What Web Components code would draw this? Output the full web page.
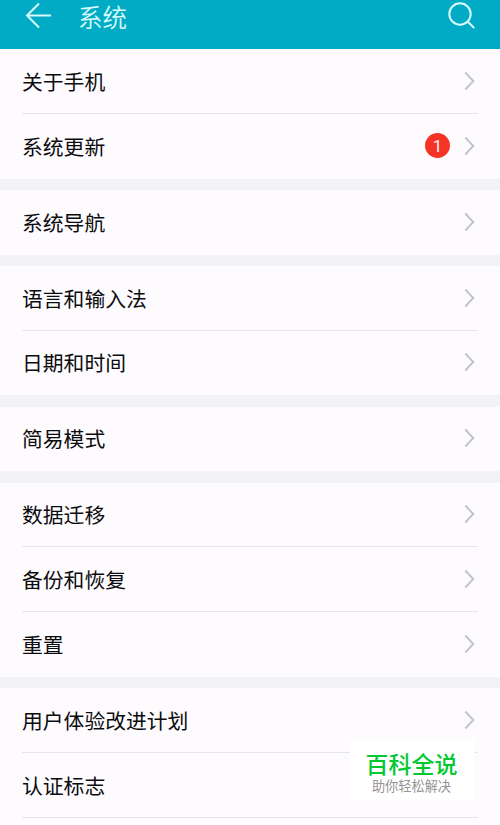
<!DOCTYPE html>
<html lang="zh-CN">
<head>
<meta charset="utf-8">
<title>系统</title>
<style>
  body {
    margin: 0;
    height: 825px;
    overflow: hidden;
    background: #f3f2f5;
    color: #0c0b0e;
    font-family: "Noto Sans CJK SC", sans-serif;
  }
</style>
</head>
<body>
<settings-page>
  <title-bar slot="header">系统</title-bar>
  <settings-group>
    <settings-item>关于手机</settings-item>
    <settings-item badge="1">系统更新</settings-item>
  </settings-group>
  <settings-group>
    <settings-item>系统导航</settings-item>
  </settings-group>
  <settings-group>
    <settings-item>语言和输入法</settings-item>
    <settings-item>日期和时间</settings-item>
  </settings-group>
  <settings-group>
    <settings-item>简易模式</settings-item>
  </settings-group>
  <settings-group>
    <settings-item>数据迁移</settings-item>
    <settings-item>备份和恢复</settings-item>
    <settings-item>重置</settings-item>
  </settings-group>
  <settings-group>
    <settings-item>用户体验改进计划</settings-item>
    <settings-item>认证标志</settings-item>
    <settings-item></settings-item>
  </settings-group>
  <site-mark slot="overlay">百科全说<span slot="sub">助你轻松解决</span></site-mark>
</settings-page>

<script>
class SettingsPage extends HTMLElement {
  constructor() {
    super();
    this.attachShadow({mode: "open"});
    this.shadowRoot.innerHTML = `
      <style>
        :host {
          display: block;
          position: relative;
          height: 825px;
          overflow: hidden;
        }

        #groups {
          display: flex;
          flex-direction: column;
          gap: 11.2px;
        }
      </style>
      <slot name="header"></slot>
      <div id="groups"><slot></slot></div>
      <slot name="overlay"></slot>
    `;
  }
}

class TitleBar extends HTMLElement {
  constructor() {
    super();
    this.attachShadow({mode: "open"});
    this.shadowRoot.innerHTML = `
      <style>
        :host {
          display: flex;
          align-items: flex-start;
          box-sizing: border-box;
          height: 49px;
          padding: 0 24px;
          background: #02abc5;
          color: #d9fbfd;
        }

        svg {
          flex: none;
          display: block;
          fill: none;
          stroke: currentColor;
          stroke-width: 2;
        }

        #title {
          flex: 1;
          margin-left: 26px;
          font-size: 24.5px;
          font-weight: 350;
          line-height: 34px;
        }
      </style>
      <svg width="28" height="32" viewBox="0 0 28 32">
        <path d="M27 15.5H3M15 3.5L3 15.5L15 27.5"/>
      </svg>
      <div id="title"><slot></slot></div>
      <svg width="28" height="32" viewBox="0 0 28 32">
        <circle cx="12" cy="14" r="10.7"/>
        <path d="M19.5 21.5L26.2 28"/>
      </svg>
    `;
  }
}

class SettingsGroup extends HTMLElement {
  constructor() {
    super();
    this.attachShadow({mode: "open"});
    this.shadowRoot.innerHTML = `
      <style>
        :host {
          display: block;
          background: #fdfbfe;
        }

        ::slotted(:not(:last-child)) {
          --divider: #e6e5e8;
        }
      </style>
      <slot></slot>
    `;
  }
}

class SettingsItem extends HTMLElement {
  constructor() {
    super();
    this.attachShadow({mode: "open"});
    this.shadowRoot.innerHTML = `
      <style>
        :host {
          display: flex;
          align-items: center;
          box-sizing: border-box;
          height: 64.8px;
          margin: 0 22px;
          border-bottom: 1px solid var(--divider, transparent);
        }

        #label {
          flex: 1;
          font-size: 20.8px;
          line-height: 30px;
        }

        #badge {
          width: 25px;
          height: 25px;
          margin-right: 14px;
          border-radius: 50%;
          background: #f43427;
          color: #fff2ee;
          font: 17px/26px Roboto, sans-serif;
          text-align: center;
        }

        #badge[hidden] {
          display: none;
        }

        svg {
          display: block;
          fill: none;
          stroke: #c5c4c8;
          stroke-width: 2;
        }
      </style>
      <div id="label"><slot></slot></div>
      <div id="badge" hidden></div>
      <svg width="14" height="20" viewBox="0 0 14 20">
        <path d="M1.3 1.5L9.3 10L1.3 18.5"/>
      </svg>
    `;
    this.badge = this.shadowRoot.getElementById("badge");
  }

  connectedCallback() {
    if (this.hasAttribute("badge")) {
      this.badge.textContent = this.getAttribute("badge");
      this.badge.hidden = false;
    }
  }
}

class SiteMark extends HTMLElement {
  constructor() {
    super();
    this.attachShadow({mode: "open"});
    this.shadowRoot.innerHTML = `
      <style>
        :host {
          position: absolute;
          right: 25px;
          bottom: 25px;
          display: flex;
          flex-direction: column;
          align-items: center;
          box-sizing: border-box;
          width: 125px;
          height: 60px;
          padding: 9px 2px 0 0;
          background: #fff;
        }

        #name {
          color: #03c832;
          font-size: 23px;
          font-weight: 500;
          line-height: 29px;
        }

        #sub {
          color: #949494;
          font-size: 13.2px;
          line-height: 16px;
        }
      </style>
      <div id="name"><slot></slot></div>
      <div id="sub"><slot name="sub"></slot></div>
    `;
  }
}

customElements.define("settings-page", SettingsPage);
customElements.define("title-bar", TitleBar);
customElements.define("settings-group", SettingsGroup);
customElements.define("settings-item", SettingsItem);
customElements.define("site-mark", SiteMark);
</script>
</body>
</html>
